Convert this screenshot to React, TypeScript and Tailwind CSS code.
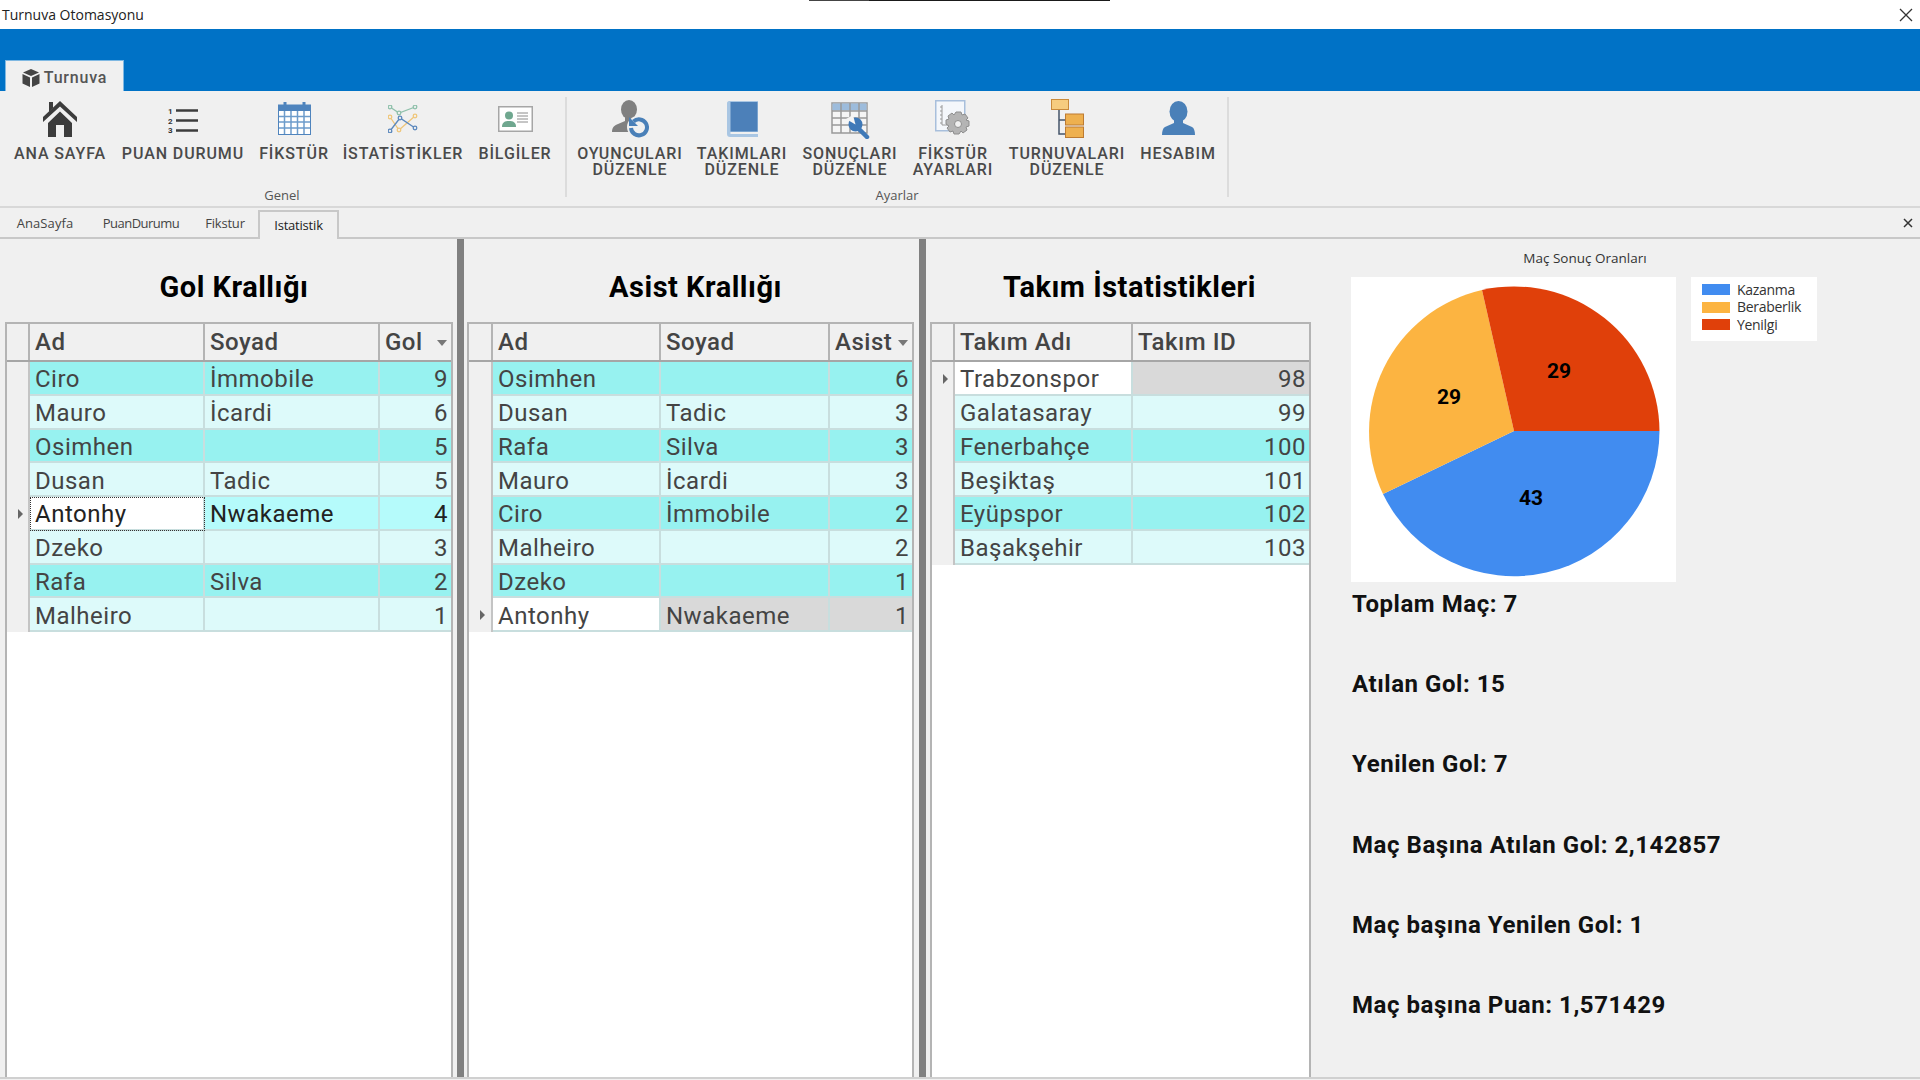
import React from "react";

const FONT = "font-['Roboto','Liberation_Sans',sans-serif]";
const UI = "font-['Open_Sans','Liberation_Sans',sans-serif]";

const HomeIcon = () => (
  <svg width="34" height="36" viewBox="0 0 34 36">
    <path d="M6 1h4v6l-4 4z" fill="#3c3c3c" />
    <path d="M17 0 34 16v5L17 5.500 0 21v-5z" fill="#3c3c3c" />
    <path d="M5 22 17 10.500 29 22v14h-8V24h-8v12H5z" fill="#3c3c3c" />
  </svg>
);

const ListIcon = () => (
  <svg width="30" height="30" viewBox="0 -3 30 30">
    <text x="0" y="7" fontSize="8" fontWeight="700" fontFamily="Roboto" fill="#333">1</text>
    <text x="0" y="17" fontSize="8" fontWeight="700" fontFamily="Roboto" fill="#333">2</text>
    <text x="0" y="26" fontSize="8" fontWeight="700" fontFamily="Roboto" fill="#333">3</text>
    <path d="M8 3.500h22M8 13.500h22M8 23.500h22" stroke="#3c3c3c" strokeWidth="2.500" />
  </svg>
);

const CalendarIcon = () => (
  <svg className="-mt-[2px]" width="33" height="34" viewBox="0 0 33 34">
    <rect x="0.500" y="4" width="32" height="29.500" fill="#fff" stroke="#4f84bd" />
    <rect x="0" y="4" width="33" height="6" fill="#4f84bd" />
    <path d="M7 1v6M26 1v6" stroke="#4f84bd" strokeWidth="3" />
    <path d="M6.500 10v23M13 10v23M19.500 10v23M26 10v23M1 15.500h31M1 21h31M1 27h31" stroke="#6d9ccb" strokeWidth="1.500" />
  </svg>
);

const StatsIcon = () => (
  <svg width="30" height="28" viewBox="0 0 30 28" fill="none" strokeWidth="1.300">
    <path d="M2 2 11 8 27 2" stroke="#8fc0ab" />
    <path d="M2 12 11 25 27 11" stroke="#efc67a" />
    <path d="M2 26 12 13 27 23" stroke="#5b88bd" />
    {[[2, 2], [11, 8], [27, 2]].map(([x, y]) => <circle key={`${x}${y}`} cx={x} cy={y} r="1.800" fill="#f0f0f0" stroke="#8fc0ab" />)}
    {[[2, 12], [11, 25], [27, 11]].map(([x, y]) => <circle key={`${x}${y}`} cx={x} cy={y} r="1.800" fill="#f0f0f0" stroke="#efc67a" />)}
    {[[2, 26], [12, 13], [27, 23]].map(([x, y]) => <circle key={`${x}${y}`} cx={x} cy={y} r="1.800" fill="#f0f0f0" stroke="#5b88bd" />)}
  </svg>
);

const CardIcon = () => (
  <svg width="35" height="26" viewBox="0 0 35 26">
    <rect x="0.750" y="0.750" width="33.500" height="24.500" fill="#fff" stroke="#a6a6a6" strokeWidth="1.500" />
    <circle cx="11" cy="9.500" r="4" fill="#6fa78f" />
    <path d="M4 21c0-5 3-6 7-6s7 1 7 6z" fill="#6fa78f" />
    <path d="M19 7h11M19 10h11M19 13h11M19 16h11" stroke="#8c8c8c" />
  </svg>
);

const PlayerEditIcon = () => (
  <svg width="37" height="38" viewBox="0 0 37 38">
    <ellipse cx="17" cy="9.500" rx="8" ry="9.500" fill="#808080" />
    <path d="M13 17h8v4l4 2c-4 2-6 5-6 9H0c0-5 3-7 6-8l7-3z" fill="#808080" />
    <circle cx="26" cy="27" r="11" fill="#f0f0f0" />
    <path d="M21.500 21.500A8 8 0 1 1 19 28" fill="none" stroke="#4a80b8" strokeWidth="4" />
    <path d="M17 17v9h9z" fill="#4a80b8" />
  </svg>
);

const BookIcon = () => (
  <svg width="31" height="36" viewBox="0 0 31 36">
    <path d="M2 0h29v31H3.500v2H31v3H3C1 36 0 35 0 33V2C0 1 1 0 2 0z" fill="#a9c6e3" />
    <rect x="3.500" y="1" width="27" height="29.500" fill="#4c80b9" />
  </svg>
);

const TableEditIcon = () => (
  <svg className="mt-[3px]" width="39" height="37" viewBox="0 0 39 37">
    <rect x="1" y="1" width="35" height="30" fill="#f5f5f5" stroke="#999" strokeWidth="1.500" />
    <rect x="1.500" y="1.500" width="34" height="7" fill="#9dbcdc" />
    <path d="M10 1v30M19 1v30M28 1v30M1 9h35M1 16h35M1 23h35" stroke="#999" strokeWidth="1.500" />
    <path d="M27 26 36 35" stroke="#3f79b8" strokeWidth="4.500" strokeLinecap="round" />
    <circle cx="24.500" cy="22.500" r="7" fill="#3f79b8" />
    <path d="M24.500 22.500 22 13 15 17z" fill="#f5f5f5" />
  </svg>
);

const GearPageIcon = () => (
  <svg width="37" height="37" viewBox="0 0 37 37">
    <rect x="0.750" y="0.750" width="29" height="30" fill="#f4f7fb" stroke="#a8bfdc" strokeWidth="1.500" />
    <path d="M7 5v20h6M7 7h-2M7 11h-2M7 15h-2M7 19h-2M7 23h-2" stroke="#9a9a9a" fill="none" />
    <path d="M21 12h5l1 3 3-1 3 4-2 2 3 1v5l-3 1 1 3-4 3-2-2-2 3h-5l-1-3-3 1-3-4 2-2-3-2v-4l3-1-1-3 4-3 2 2z" fill="#b4b4b4" stroke="#8e8e8e" />
    <circle cx="23" cy="24" r="3.500" fill="#f0f0f0" stroke="#8e8e8e" />
  </svg>
);

const TreeIcon = () => (
  <svg width="33" height="39" viewBox="0 0 33 39">
    <path d="M8 11v24h6M8 21h6" stroke="#44546a" strokeWidth="1.500" fill="none" />
    <rect x="0.500" y="0.500" width="17" height="10" fill="#f6cc7f" stroke="#c98a3b" />
    <rect x="14.500" y="15" width="18" height="11" fill="#eeb04f" stroke="#bd7b32" />
    <rect x="14.500" y="28" width="18" height="10.500" fill="#eeb04f" stroke="#bd7b32" />
  </svg>
);

const UserIcon = () => (
  <svg className="-mt-[2px]" width="33" height="34" viewBox="0 0 33 34">
    <ellipse cx="16.500" cy="10.500" rx="9" ry="10.500" fill="#4a80b8" />
    <path d="M12 18h9v4l9 4c2 1 3 4 3 8H0c0-4 1-7 3-8l9-4z" fill="#4a80b8" />
  </svg>
);

const CubeIcon = () => (
  <svg width="18" height="18" viewBox="0 0 18 18">
    <path d="M9 0 17 3.500 9 7 1 3.500z" fill="#444" />
    <path d="M0.500 5 8 8.500V18L0.500 14.500z" fill="#444" />
    <path d="M17.500 5 10 8.500V18l7.500-3.500z" fill="#444" />
  </svg>
);

function RibbonButton({ icon, lines, width }: { icon: React.ReactNode; lines: string[]; width: string }) {
  return (
    <div className={`${width} flex flex-col items-center`}>
      <div className="h-[43px] flex items-center justify-center">{icon}</div>
      <div className={`${FONT} mt-[6px] text-center text-[16px] leading-[16px] font-medium tracking-[0.9px] text-[#4a4a4a] whitespace-nowrap`}>
        {lines.map((l) => <div key={l}>{l}</div>)}
      </div>
    </div>
  );
}

function RibbonGroup({ label, children }: { label: string; children: React.ReactNode }) {
  return (
    <div className="flex flex-col h-full">
      <div className="flex flex-1">{children}</div>
      <div className={`${UI} text-center text-[13px] leading-[18px] text-[#555] pr-[2px] pb-[1px]`}>{label}</div>
    </div>
  );
}

type Tone = "a" | "b" | "sel" | "last" | "team";
type Row = { tone: Tone; cells: string[] };

function rowColor(tone: Tone) {
  if (tone === "a") return "bg-[#97f2f0]";
  if (tone === "b") return "bg-[#ddfafa]";
  if (tone === "sel") return "bg-[#b5fbfb]";
  return "bg-[#d9d9d9]";
}

function DataGrid({ cols, widths, rows, sorted, marker }: {
  cols: string[];
  widths: string;
  rows: Row[];
  sorted?: boolean;
  marker: number;
}) {
  return (
    <div className={`${FONT} flex-1 bg-white border-2 border-b-0 border-[#b4b4b4] text-[24px] tracking-[0.5px] overflow-hidden`}>
      <div className={`grid ${widths} h-[38px] bg-[#f0f0f0] border-b-2 border-[#a6a6a6]`}>
        <div className="border-r-2 border-[#b4b4b4]" />
        {cols.map((c, i) => (
          <div key={c} className={`relative flex items-center pl-[5px] font-medium text-[#444] ${i < cols.length - 1 ? "border-r-2 border-[#b4b4b4]" : ""}`}>
            {c}
            {sorted && i === cols.length - 1 && (
              <span className="absolute right-[4px] top-[16px] w-0 h-0 border-x-[5px] border-x-transparent border-t-[6px] border-t-[#777]" />
            )}
          </div>
        ))}
      </div>
      {rows.map((r, ri) => (
        <div key={r.cells[0]} className={`grid ${widths} h-[33.750px]`}>
          <div className="relative bg-[#f0f0f0] border-r-2 border-[#c4c4c4]">
            {ri === marker && (
              <span className="absolute left-[11px] top-[12px] w-0 h-0 border-y-[5px] border-y-transparent border-l-[5px] border-l-[#666]" />
            )}
          </div>
          {r.cells.map((c, i) => {
            const firstPlain = i === 0 && (r.tone === "sel" || r.tone === "last" || r.tone === "team");
            const last = i === r.cells.length - 1;
            const focus = i === 0 && r.tone === "sel";
            return (
              <div
                key={i}
                className={`flex items-center pl-[5px] pt-[3px] leading-none border-b-2 border-[#c8dede] ${last ? "justify-end pr-[3px]" : "border-r-2"} ${firstPlain ? "bg-white" : rowColor(r.tone)} ${r.tone === "sel" ? "text-[#222]" : "text-[#444]"} ${focus ? "outline-dotted outline-1 -outline-offset-1 outline-[#333]" : ""}`}
              >
                {c}
              </div>
            );
          })}
        </div>
      ))}
    </div>
  );
}

function GridColumn({ title, titleClass, children, className }: { title: string; titleClass: string; children: React.ReactNode; className: string }) {
  return (
    <div className={`flex flex-col ${className}`}>
      <div className={`${FONT} h-[83px] shrink-0 flex items-center justify-center text-[29px] tracking-[0.5px] font-bold text-black pt-[14px] ${titleClass}`}>{title}</div>
      {children}
    </div>
  );
}

const Splitter = ({ width }: { width: string }) => <div className={`${width} bg-[#808080] shrink-0`} />;

const golRows: Row[] = [
  { tone: "a", cells: ["Ciro", "İmmobile", "9"] },
  { tone: "b", cells: ["Mauro", "İcardi", "6"] },
  { tone: "a", cells: ["Osimhen", "", "5"] },
  { tone: "b", cells: ["Dusan", "Tadic", "5"] },
  { tone: "sel", cells: ["Antonhy", "Nwakaeme", "4"] },
  { tone: "b", cells: ["Dzeko", "", "3"] },
  { tone: "a", cells: ["Rafa", "Silva", "2"] },
  { tone: "b", cells: ["Malheiro", "", "1"] },
];

const asistRows: Row[] = [
  { tone: "a", cells: ["Osimhen", "", "6"] },
  { tone: "b", cells: ["Dusan", "Tadic", "3"] },
  { tone: "a", cells: ["Rafa", "Silva", "3"] },
  { tone: "b", cells: ["Mauro", "İcardi", "3"] },
  { tone: "a", cells: ["Ciro", "İmmobile", "2"] },
  { tone: "b", cells: ["Malheiro", "", "2"] },
  { tone: "a", cells: ["Dzeko", "", "1"] },
  { tone: "last", cells: ["Antonhy", "Nwakaeme", "1"] },
];

const teamRows: Row[] = [
  { tone: "team", cells: ["Trabzonspor", "98"] },
  { tone: "b", cells: ["Galatasaray", "99"] },
  { tone: "a", cells: ["Fenerbahçe", "100"] },
  { tone: "b", cells: ["Beşiktaş", "101"] },
  { tone: "a", cells: ["Eyüpspor", "102"] },
  { tone: "b", cells: ["Başakşehir", "103"] },
];

const stats = [
  "Toplam Maç: 7",
  "Atılan Gol: 15",
  "Yenilen Gol: 7",
  "Maç Başına Atılan Gol: 2,142857",
  "Maç başına Yenilen Gol: 1",
  "Maç başına Puan: 1,571429",
];

const legend = [
  { label: "Kazanma", color: "bg-[#418cf0]" },
  { label: "Beraberlik", color: "bg-[#fcb441]" },
  { label: "Yenilgi", color: "bg-[#e0400a]" },
];

export default function App() {
  return (
    <div className="relative h-screen w-full flex flex-col overflow-hidden bg-[#f0f0f0]">
      {/* baslik cubugu */}
      <div className="h-[29px] shrink-0 bg-white flex items-center justify-between pl-[2px] pr-[7px]">
        <span className={`${UI} text-[14px] text-[#222]`}>Turnuva Otomasyonu</span>
        <svg width="14" height="14" viewBox="0 0 14 14"><path d="M1 1l12 12M13 1 1 13" stroke="#333" strokeWidth="1.300" /></svg>
      </div>
      <div className="absolute top-0 left-[809px] w-[301px] h-px bg-[#1a1a1a]">
        <div className="w-[60px] h-px bg-[#444]" />
      </div>

      {/* mavi serit */}
      <div className="h-[62px] shrink-0 bg-[#0072c6] flex items-end pl-[5px]">
        <div className={`${FONT} h-[31px] w-[119px] pt-[3px] bg-[#f0f0f0] border-t border-x border-[#7fb8e2] flex items-center justify-center gap-[4px] text-[16px] tracking-[0.8px] font-medium text-[#555]`}>
          <CubeIcon />
          Turnuva
        </div>
      </div>

      {/* ribbon */}
      <div className="h-[117px] shrink-0 bg-[#f0f0f0] border-b-2 border-[#d8d8d8] flex pl-[6px] pt-[6px] pb-[1px]">
        <RibbonGroup label="Genel">
          <RibbonButton width="w-[108px]" icon={<HomeIcon />} lines={["ANA SAYFA"]} />
          <RibbonButton width="w-[138px]" icon={<ListIcon />} lines={["PUAN DURUMU"]} />
          <RibbonButton width="w-[84px]" icon={<CalendarIcon />} lines={["FİKSTÜR"]} />
          <RibbonButton width="w-[134px]" icon={<StatsIcon />} lines={["İSTATİSTİKLER"]} />
          <RibbonButton width="w-[90px]" icon={<CardIcon />} lines={["BİLGİLER"]} />
        </RibbonGroup>
        <div className="w-[2px] h-[100px] bg-[#dcdcdc] ml-[5px] mr-[5px]" />
        <RibbonGroup label="Ayarlar">
          <RibbonButton width="w-[116px]" icon={<PlayerEditIcon />} lines={["OYUNCULARI", "DÜZENLE"]} />
          <RibbonButton width="w-[108px]" icon={<BookIcon />} lines={["TAKIMLARI", "DÜZENLE"]} />
          <RibbonButton width="w-[108px]" icon={<TableEditIcon />} lines={["SONUÇLARI", "DÜZENLE"]} />
          <RibbonButton width="w-[98px]" icon={<GearPageIcon />} lines={["FİKSTÜR", "AYARLARI"]} />
          <RibbonButton width="w-[130px]" icon={<TreeIcon />} lines={["TURNUVALARI", "DÜZENLE"]} />
          <RibbonButton width="w-[92px]" icon={<UserIcon />} lines={["HESABIM"]} />
        </RibbonGroup>
        <div className="w-[2px] h-[100px] bg-[#dcdcdc] ml-[3px]" />
      </div>

      {/* sekmeler */}
      <div className={`${UI} h-[31px] shrink-0 flex items-end border-b-2 border-[#c8c8c8] text-[13px] tracking-[-0.2px] text-[#444] pr-[7px]`}>
        <div className="w-[90px] h-[29px] pt-[3px] flex items-center justify-center tracking-[0.1px]">AnaSayfa</div>
        <div className="w-[108px] h-[29px] pt-[3px] flex items-center justify-center -ml-[3px] tracking-[-0.5px]">PuanDurumu</div>
        <div className="w-[62px] h-[29px] pt-[3px] flex items-center justify-center -ml-[1px]">Fikstur</div>
        <div className="w-[81px] h-[29px] -mb-[2px] ml-[2px] bg-[#f0f0f0] border-2 border-b-0 border-[#c8c8c8] flex items-center justify-center text-[#222] z-10">Istatistik</div>
        <svg className="ml-auto mb-[9px]" width="10" height="10" viewBox="0 0 10 10"><path d="M1 1l8 8M9 1 1 9" stroke="#333" strokeWidth="1.500" /></svg>
      </div>

      {/* icerik */}
      <div className="flex-1 min-h-0 flex border-b-2 border-[#d0d0d0] mb-px">
        <GridColumn title="Gol Krallığı" titleClass="pl-[10px]" className="w-[457px] pl-[5px] pr-[4px] shrink-0">
          <DataGrid cols={["Ad", "Soyad", "Gol"]} widths="grid-cols-[23px_175px_175px_1fr]" rows={golRows} sorted marker={4} />
        </GridColumn>
        <Splitter width="w-[7px]" />
        <GridColumn title="Asist Krallığı" titleClass="pl-[10px]" className="w-[455px] pl-[3px] pr-[5px] shrink-0">
          <DataGrid cols={["Ad", "Soyad", "Asist"]} widths="grid-cols-[24px_168px_169px_1fr]" rows={asistRows} sorted marker={7} />
        </GridColumn>
        <Splitter width="w-[7px]" />
        <GridColumn title="Takım İstatistikleri" titleClass="pl-[18px]" className="w-[385px] pl-[4px] shrink-0">
          <DataGrid cols={["Takım Adı", "Takım ID"]} widths="grid-cols-[23px_178px_1fr]" rows={teamRows} marker={0} />
        </GridColumn>

        {/* grafik ve ozet */}
        <div className="flex-1 pl-[40px] pt-[11px]">
          <div className={`${UI} w-[468px] text-center text-[13.500px] leading-[16px] text-[#333]`}>Maç Sonuç Oranları</div>
          <div className="flex gap-[15px] items-start mt-[11px]">
            <div className="w-[325px] h-[305px] bg-white">
              <svg width="325" height="305" viewBox="0 0 325 305">
                <path d="M163 154 L308.500 154 A145.500 145.500 0 0 1 32 217 Z" fill="#418cf0" />
                <path d="M163 154 L32 217 A145.500 145.500 0 0 1 131 13 Z" fill="#fcb441" />
                <path d="M163 154 L131 13 A145.500 145.500 0 0 1 308.500 154 Z" fill="#e0400a" />
                <g fontFamily="Roboto" fontWeight="700" fontSize="21" textAnchor="middle" fill="#000">
                  <text x="208" y="101">29</text>
                  <text x="98" y="127">29</text>
                  <text x="180" y="228">43</text>
                </g>
              </svg>
            </div>
            <div className={`${UI} w-[126px] h-[64px] bg-white flex flex-col pl-[11px] pt-[4px] text-[14px] tracking-[-0.3px] text-[#333]`}>
              {legend.map((l) => (
                <div key={l.label} className="flex items-center h-[17.500px] leading-none">
                  <span className={`w-[28px] h-[11px] ${l.color} mr-[7px]`} />
                  {l.label}
                </div>
              ))}
            </div>
          </div>
          <div className={`${FONT} mt-[7px] pl-[1px] flex flex-col gap-[50.200px] text-[24px] tracking-[0.55px] leading-[30px] font-bold text-[#111]`}>
            {stats.map((s) => <div key={s}>{s}</div>)}
          </div>
        </div>
      </div>
    </div>
  );
}
